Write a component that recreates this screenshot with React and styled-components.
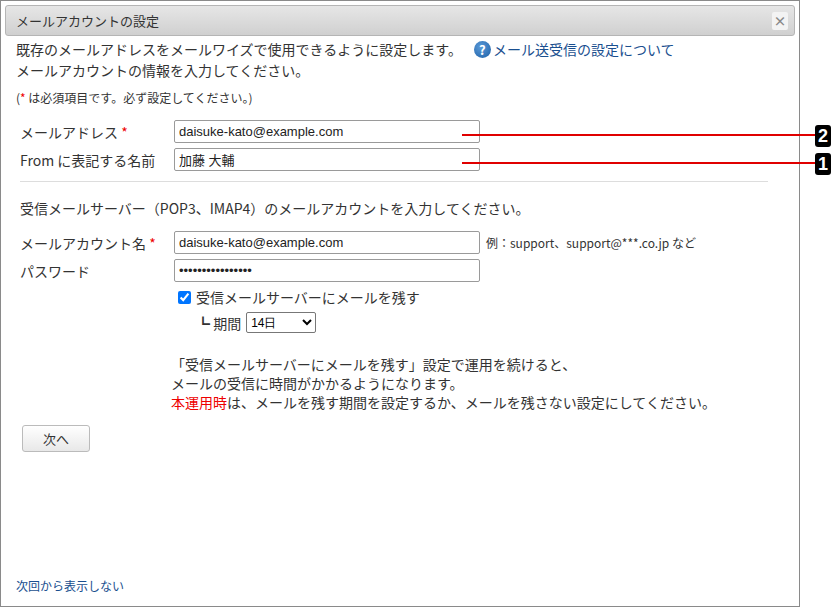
import React from "react";
import styled, { createGlobalStyle } from "styled-components";

const Global = createGlobalStyle`
  html, body { margin: 0; padding: 0; background: #fff; }
  body { font-family: "Noto Sans CJK JP", "Liberation Sans", sans-serif; color: #333; }
`;

const Page = styled.div`
  position: relative;
  width: 832px;
  height: 607px;
  overflow: hidden;
`;

const Dialog = styled.div`
  box-sizing: border-box;
  width: 800px;
  height: 607px;
  border: 1px solid #8a8a8a;
  padding: 4px 4px 0 4px;
  display: flex;
  flex-direction: column;
`;

const Header = styled.div`
  height: 29px;
  background: linear-gradient(#e6e6e6, #d0d0d0);
  border: 1px solid #b5b5b5;
  border-radius: 3px;
  display: flex;
  align-items: center;
  justify-content: space-between;
  padding: 0 6px 0 10px;
  font-size: 13px;
  color: #333;
`;

const Close = styled.div`
  width: 16px;
  height: 18px;
  background: #f3f3f3;
  border-radius: 2px;
  display: flex;
  align-items: center;
  justify-content: center;
  font-size: 13px;
  font-weight: bold;
  color: #888;
`;

const Body = styled.div`
  flex: 1;
  display: flex;
  flex-direction: column;
  padding: 3px 11px 0 11px;
  font-size: 14px;
`;

const Intro = styled.div`
  line-height: 21px;
`;

const HelpLink = styled.a`
  color: #1a4f8f;
  text-decoration: none;
  margin-left: 12px;
  display: inline-flex;
  align-items: center;
  gap: 2px;
`;

const HelpIcon = styled.span`
  display: inline-flex;
  width: 17px;
  height: 17px;
  border-radius: 50%;
  background: radial-gradient(circle at 40% 35%, #5a9ad8, #1d5fa6);
  color: #fff;
  font-size: 13px;
  font-weight: bold;
  align-items: center;
  justify-content: center;
`;

const Note = styled.div`
  font-size: 12px;
  margin-top: 8px;
`;

const Red = styled.span`
  color: #e00;
`;

const Form = styled.div`
  display: grid;
  grid-template-columns: 154px auto;
  row-gap: 5px;
  align-items: center;
  margin-top: ${(p) => p.top}px;
  padding-left: 4px;
`;

const Label = styled.div`
  font-size: 14px;
`;

const Field = styled.div`
  display: flex;
  align-items: center;
  gap: 6px;
`;

const Input = styled.input`
  box-sizing: border-box;
  width: 306px;
  height: 23px;
  border: 1px solid #9a9a9a;
  border-radius: 2px;
  font-family: "Liberation Sans", "Noto Sans CJK JP", sans-serif;
  font-size: 13px;
  color: #222;
  padding: 0 4px;
`;

const Hint = styled.span`
  font-size: 12px;
`;

const Divider = styled.hr`
  border: none;
  border-top: 1px solid #ddd;
  margin: 10px 16px 0 4px;
`;

const Section = styled.div`
  margin-top: 16px;
  padding-left: 4px;
`;

const Sub = styled.div`
  grid-column: 2;
  display: flex;
  align-items: center;
  gap: 3px;
  padding-left: ${(p) => p.indent || 0}px;
`;

const Select = styled.select`
  height: 21px;
  width: 70px;
  font-size: 12px;
  border: 1px solid #777;
  border-radius: 2px;
  background: #fff;
  margin-left: 2px;
`;

const Notice = styled.div`
  margin: 22px 0 0 155px;
  line-height: 19px;
`;

const Button = styled.button`
  align-self: flex-start;
  margin: 13px 0 0 6px;
  width: 68px;
  height: 27px;
  border: 1px solid #bbb;
  border-radius: 3px;
  background: linear-gradient(#fff, #e8e8e8);
  font-family: inherit;
  font-size: 13px;
  color: #333;
`;

const Footer = styled.a`
  margin-top: auto;
  margin-bottom: 12px;
  font-size: 12px;
  color: #1a4f8f;
  text-decoration: none;
`;

const Callout = styled.div`
  position: absolute;
  left: 462px;
  top: ${(p) => p.y}px;
  width: 354px;
  height: 2px;
  background: #e00000;
`;

const Marker = styled.div`
  position: absolute;
  left: 815px;
  top: ${(p) => p.y - 10}px;
  width: 16px;
  height: 22px;
  background: #000;
  border-radius: 3px;
  color: #fff;
  font-family: "Liberation Sans", sans-serif;
  font-weight: bold;
  font-size: 18px;
  display: flex;
  align-items: center;
  justify-content: center;
`;

export default function App() {
  return (
    <Page>
      <Global />
      <Dialog>
        <Header>
          <span>メールアカウントの設定</span>
          <Close>×</Close>
        </Header>
        <Body>
          <Intro>
            既存のメールアドレスをメールワイズで使用できるように設定します。
            <HelpLink href="#">
              <HelpIcon>?</HelpIcon>メール送受信の設定について
            </HelpLink>
            <br />
            メールアカウントの情報を入力してください。
          </Intro>
          <Note>
            (<Red>*</Red> は必須項目です。必ず設定してください。)
          </Note>
          <Form top={14}>
            <Label>
              メールアドレス <Red>*</Red>
            </Label>
            <Input defaultValue="daisuke-kato@example.com" />
            <Label>From に表記する名前</Label>
            <Input defaultValue="加藤 大輔" />
          </Form>
          <Divider />
          <Section>受信メールサーバー（POP3、IMAP4）のメールアカウントを入力してください。</Section>
          <Form top={13}>
            <Label>
              メールアカウント名 <Red>*</Red>
            </Label>
            <Field>
              <Input defaultValue="daisuke-kato@example.com" />
              <Hint>例：support、support@***.co.jp など</Hint>
            </Field>
            <Label>パスワード</Label>
            <Input type="password" defaultValue="pass1234pass1234" />
            <Sub>
              <input type="checkbox" defaultChecked style={{ margin: "0 2px 0 4px" }} />
              受信メールサーバーにメールを残す
            </Sub>
            <Sub indent={22}>
              ┗ 期間
              <Select defaultValue="14">
                <option value="14">14日</option>
              </Select>
            </Sub>
          </Form>
          <Notice>
            「受信メールサーバーにメールを残す」設定で運用を続けると、
            <br />
            メールの受信に時間がかかるようになります。
            <br />
            <Red>本運用時</Red>は、メールを残す期間を設定するか、メールを残さない設定にしてください。
          </Notice>
          <Button>次へ</Button>
          <Footer href="#">次回から表示しない</Footer>
        </Body>
      </Dialog>
      <Callout y={134} />
      <Marker y={135}>2</Marker>
      <Callout y={162} />
      <Marker y={163}>1</Marker>
    </Page>
  );
}
